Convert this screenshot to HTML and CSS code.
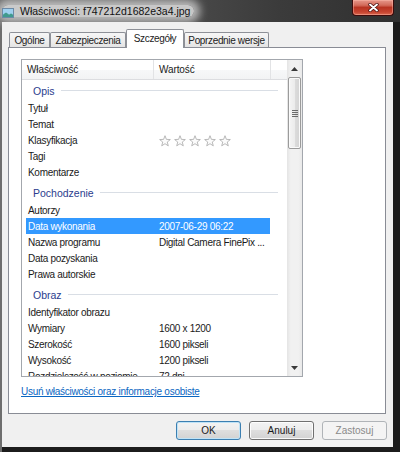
FILE: index.html
```html
<!DOCTYPE html>
<html lang="pl">
<head>
<meta charset="utf-8">
<title>Właściwości</title>
<link rel="stylesheet" href="styles.css">
</head>
<body>
<div class="window">
  <div class="titlebar">
    <div class="title-glow">
      <svg class="app-icon" width="12" height="10" viewBox="0 0 12 10">
        <rect x="0.5" y="0.5" width="11" height="9" fill="#e9f4fb" stroke="#6c8aa6"/>
        <rect x="1" y="1" width="10" height="5" fill="#9fd0ef"/>
        <path d="M1 9 L1 6.5 L4 4.5 L7 6.5 L9 5.5 L11 6.5 L11 9 Z" fill="#3f9a8e"/>
      </svg>
      <span class="title">Właściwości: f747212d1682e3a4.jpg</span>
    </div>
    <div class="close-btn">
      <svg width="11" height="9" viewBox="0 0 11 9">
        <path d="M2 1.5 L9 7.5 M9 1.5 L2 7.5" stroke="#4a1010" stroke-width="3.4" stroke-linecap="round"/>
        <path d="M2 1.5 L9 7.5 M9 1.5 L2 7.5" stroke="#ffffff" stroke-width="1.9" stroke-linecap="round"/>
      </svg>
    </div>
  </div>

  <div class="dialog">
    <div class="tabs">
      <div class="tab tab-general">Ogólne</div>
      <div class="tab tab-security">Zabezpieczenia</div>
      <div class="tab tab-details tab-active">Szczegóły</div>
      <div class="tab tab-versions">Poprzednie wersje</div>
    </div>

    <div class="panel">
      <div class="listview">
        <div class="lv-main">
          <div class="lv-header">
            <div class="hcol col-name">Właściwość</div>
            <div class="hcol col-value">Wartość</div>
            <div class="hcol col-rest"></div>
          </div>
          <div class="lv-body">
            <div class="group group-first"><span>Opis</span></div>
            <div class="row"><span class="name">Tytuł</span><span class="value"></span></div>
            <div class="row"><span class="name">Temat</span><span class="value"></span></div>
            <div class="row"><span class="name">Klasyfikacja</span>
              <span class="value stars">
                <svg class="star" width="12" height="12" viewBox="0 0 12 12"><path d="M6 0.7 L7.41 4.36 L11.33 4.57 L8.28 7.04 L9.29 10.83 L6 8.7 L2.71 10.83 L3.72 7.04 L0.67 4.57 L4.59 4.36 Z"/></svg>
                <svg class="star" width="12" height="12" viewBox="0 0 12 12"><path d="M6 0.7 L7.41 4.36 L11.33 4.57 L8.28 7.04 L9.29 10.83 L6 8.7 L2.71 10.83 L3.72 7.04 L0.67 4.57 L4.59 4.36 Z"/></svg>
                <svg class="star" width="12" height="12" viewBox="0 0 12 12"><path d="M6 0.7 L7.41 4.36 L11.33 4.57 L8.28 7.04 L9.29 10.83 L6 8.7 L2.71 10.83 L3.72 7.04 L0.67 4.57 L4.59 4.36 Z"/></svg>
                <svg class="star" width="12" height="12" viewBox="0 0 12 12"><path d="M6 0.7 L7.41 4.36 L11.33 4.57 L8.28 7.04 L9.29 10.83 L6 8.7 L2.71 10.83 L3.72 7.04 L0.67 4.57 L4.59 4.36 Z"/></svg>
                <svg class="star" width="12" height="12" viewBox="0 0 12 12"><path d="M6 0.7 L7.41 4.36 L11.33 4.57 L8.28 7.04 L9.29 10.83 L6 8.7 L2.71 10.83 L3.72 7.04 L0.67 4.57 L4.59 4.36 Z"/></svg>
              </span>
            </div>
            <div class="row"><span class="name">Tagi</span><span class="value"></span></div>
            <div class="row"><span class="name">Komentarze</span><span class="value"></span></div>

            <div class="group"><span>Pochodzenie</span></div>
            <div class="row"><span class="name">Autorzy</span><span class="value"></span></div>
            <div class="row row-selected"><span class="name">Data wykonania</span><span class="value">2007-06-29 06:22</span></div>
            <div class="row"><span class="name">Nazwa programu</span><span class="value">Digital Camera FinePix ...</span></div>
            <div class="row"><span class="name">Data pozyskania</span><span class="value"></span></div>
            <div class="row"><span class="name">Prawa autorskie</span><span class="value"></span></div>

            <div class="group"><span>Obraz</span></div>
            <div class="row"><span class="name">Identyfikator obrazu</span><span class="value"></span></div>
            <div class="row"><span class="name">Wymiary</span><span class="value">1600 x 1200</span></div>
            <div class="row"><span class="name">Szerokość</span><span class="value">1600 pikseli</span></div>
            <div class="row"><span class="name">Wysokość</span><span class="value">1200 pikseli</span></div>
            <div class="row"><span class="name">Rozdzielczość w poziomie</span><span class="value">72 dpi</span></div>
          </div>
        </div>
        <div class="scrollbar">
          <div class="sb-btn">
            <svg width="7" height="4" viewBox="0 0 7 4"><path d="M0 4 L3.5 0 L7 4 Z" fill="#3a3a3a"/></svg>
          </div>
          <div class="sb-thumb">
            <svg width="6" height="7" viewBox="0 0 6 7">
              <path d="M0 0.5 H6 M0 2.5 H6 M0 4.5 H6 M0 6.5 H6" stroke="#6a6a6a" stroke-width="1"/>
            </svg>
          </div>
          <div class="sb-track"></div>
          <div class="sb-btn">
            <svg width="7" height="4" viewBox="0 0 7 4"><path d="M0 0 L7 0 L3.5 4 Z" fill="#3a3a3a"/></svg>
          </div>
        </div>
      </div>
      <a class="link" href="#">Usuń właściwości oraz informacje osobiste</a>
    </div>

    <div class="buttons">
      <button class="btn btn-default">OK</button>
      <button class="btn">Anuluj</button>
      <button class="btn btn-disabled">Zastosuj</button>
    </div>
  </div>
</div>
</body>
</html>
```

FILE: styles.css
```css
* {
  box-sizing: border-box;
}

html,
body {
  margin: 0;
  padding: 0;
}

body {
  width: 400px;
  height: 452px;
  overflow: hidden;
  background: #111;
  font-family: "Liberation Sans", Arial, sans-serif;
  font-size: 10px;
  color: #1a1a1a;
}

.window {
  width: 400px;
  height: 452px;
  display: flex;
  flex-direction: column;
  background: linear-gradient(to right, #6e6e6e 0, #6e6e6e 2px, #1c1c1c 2px, #1c1c1c 100%);
}

/* ---------- title bar ---------- */
.titlebar {
  height: 22px;
  flex: none;
  display: flex;
  align-items: flex-start;
  background: linear-gradient(to right, #5c5c5c 0%, #4a4a4a 45%, #3b3b3b 70%, #303030 100%);
}

.title-glow {
  margin: 5px 0 0 2px;
  height: 12px;
  display: flex;
  align-items: center;
  gap: 6px;
  padding-right: 4px;
  background: rgba(222, 222, 222, 0.85);
  box-shadow: 0 0 9px 6px rgba(222, 222, 222, 0.75);
  border-radius: 6px;
}

.app-icon {
  display: block;
  margin-top: 4px;
}

.title {
  font-size: 10.5px;
  color: #111;
  white-space: nowrap;
}

.close-btn {
  margin-left: auto;
  margin-right: 6px;
  width: 42px;
  height: 16px;
  border: 1px solid #3d0b0b;
  border-top: none;
  border-radius: 0 0 4px 4px;
  background: linear-gradient(#e6978a 0%, #d36b5b 35%, #b83422 50%, #c64430 80%, #d9674f 100%);
  box-shadow: inset 0 0 0 1px rgba(255, 190, 175, 0.45);
  display: flex;
  align-items: center;
  justify-content: center;
}

.close-btn svg {
  display: block;
}

/* ---------- dialog body ---------- */
.dialog {
  flex: none;
  margin: 0 7px 0 2px;
  background: #f0f0f0;
  padding: 7px 6px 7px 6px;
  display: flex;
  flex-direction: column;
}

.tabs {
  display: flex;
  align-items: flex-end;
  height: 19px;
  margin: 0 0 -1px 1px;
}

.tab {
  height: 15px;
  margin-bottom: 1px;
  border: 1px solid #8d9097;
  border-bottom: none;
  border-radius: 2px 2px 0 0;
  background: linear-gradient(#f6f6f6, #ececec 60%, #e4e4e4);
  display: flex;
  align-items: center;
  justify-content: center;
  white-space: nowrap;
  letter-spacing: -0.35px;
  color: #222;
}

.tab-general { width: 41px; }
.tab-security { width: 76px; }
.tab-details { width: 58px; }
.tab-versions { width: 85px; }

.tab-active {
  position: relative;
  z-index: 1;
  height: 19px;
  margin-bottom: 0;
  background: #fff;
  padding-bottom: 2px;
}

.panel {
  height: 367px;
  margin-right: 1px;
  border: 1px solid #898c95;
  background: #fff;
  padding: 11px 0 0 12px;
  display: flex;
  flex-direction: column;
  align-items: flex-start;
}

/* ---------- list view ---------- */
.listview {
  width: 282px;
  height: 318px;
  border: 1px solid #a3a7ad;
  display: flex;
}

.lv-main {
  width: 265px;
  display: flex;
  flex-direction: column;
  overflow: hidden;
}

.lv-header {
  height: 20px;
  flex: none;
  display: flex;
  border-bottom: 1px solid #dcdde0;
  background: linear-gradient(#ffffff 0%, #ffffff 50%, #f7f8f9 50%, #f2f3f4 100%);
}

.hcol {
  line-height: 20px;
  padding-left: 5px;
  border-right: 1px solid #e2e3e5;
  white-space: nowrap;
  letter-spacing: -0.1px;
  color: #1a1a1a;
}

.col-name { width: 132px; }
.col-value { width: 117px; }
.col-rest { flex: 1; border-right: none; }

.lv-body {
  flex: 1;
  overflow: hidden;
}

.group {
  width: 252px;
  height: 20px;
  margin: 2px 0 0 4px;
  padding-left: 7px;
  padding-top: 1px;
  display: flex;
  align-items: center;
  color: #2b3d8e;
  font-size: 10.5px;
}

.group-first {
  margin-top: 0;
}

.group::after {
  content: "";
  flex: 1;
  height: 1px;
  margin-left: 6px;
  background: #d9dee5;
}

.row {
  width: 244px;
  height: 16px;
  margin-left: 4px;
  display: grid;
  grid-template-columns: 131px 1fr;
  line-height: 17px;
  white-space: nowrap;
  letter-spacing: -0.3px;
}

.row .name,
.row .value {
  padding-left: 2px;
  overflow: hidden;
}

.row-selected {
  background: #3399ff;
  color: #fff;
}

.stars {
  display: flex;
  align-items: center;
  gap: 3px;
  padding-top: 1px;
}

.star {
  display: block;
  fill: #fbfbfb;
  stroke: #a8a8a8;
  stroke-width: 0.8;
  stroke-linejoin: round;
}

/* ---------- scrollbar ---------- */
.scrollbar {
  width: 15px;
  display: flex;
  flex-direction: column;
  background: linear-gradient(to right, #e4e4e4 0%, #f1f1f1 25%, #f1f1f1 75%, #e9e9e9 100%);
}

.sb-btn {
  height: 17px;
  flex: none;
  display: flex;
  align-items: center;
  justify-content: center;
}

.sb-btn svg {
  display: block;
}

.sb-thumb {
  height: 72px;
  flex: none;
  margin: 0 1px;
  border: 1px solid #9b9b9b;
  border-radius: 2px;
  background: linear-gradient(to right, #f5f5f5 0%, #ececec 50%, #dcdcdc 51%, #d4d4d4 100%);
  box-shadow: inset 0 0 0 1px #fafafa;
  display: flex;
  align-items: center;
  justify-content: center;
}

.sb-thumb svg {
  display: block;
}

.sb-track {
  flex: 1;
}

/* ---------- link ---------- */
.link {
  margin-top: 8px;
  line-height: 14px;
  color: #0a66c2;
  text-decoration: underline;
  white-space: nowrap;
  letter-spacing: -0.27px;
}

/* ---------- buttons ---------- */
.buttons {
  display: flex;
  justify-content: flex-end;
  gap: 8px;
  margin-top: 7px;
}

.btn {
  width: 65px;
  height: 19px;
  padding: 0;
  border: 1px solid #707070;
  border-radius: 3px;
  background: linear-gradient(#f3f3f3 0%, #ececec 48%, #dedede 50%, #d2d2d2 100%);
  box-shadow: inset 0 0 0 1px rgba(255, 255, 255, 0.85);
  font-family: inherit;
  font-size: 10px;
  color: #1a1a1a;
  display: flex;
  align-items: center;
  justify-content: center;
}

.btn-default {
  border-color: #3c7fb1;
  box-shadow: inset 0 0 0 1px #bfe3f7;
}

.btn-disabled {
  border-color: #b0b4b8;
  background: #f4f4f4;
  box-shadow: none;
  color: #8a8a8a;
}
```
